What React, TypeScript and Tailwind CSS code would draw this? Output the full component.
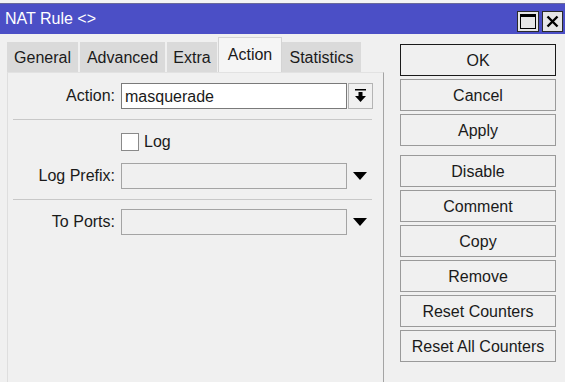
import React from 'react'

const tabs = [
  { name: 'General', w: 'w-[71px]', ml: 'ml-0' },
  { name: 'Advanced', w: 'w-[85px]', ml: 'ml-[2px]' },
  { name: 'Extra', w: 'w-[50px]', ml: 'ml-[2px]' },
  { name: 'Action', w: 'w-[64px]', ml: 'ml-px', active: true },
  { name: 'Statistics', w: 'w-[79px]', ml: 'ml-0' },
]

// right-hand button column
const ActionButton = ({ label, primary }: { label: string; primary?: boolean }) => (
  <button
    className={`h-[32px] w-[156px] pt-[2px] bg-[#f0f0f0] text-[16px] text-[#1a1a1a] border ${
      primary ? 'border-[#1a1a1a]' : 'border-[#9a9a9a]'
    }`}
  >
    {label}
  </button>
)

const DropArrow = () => (
  <svg width="14" height="8" viewBox="0 0 14 8">
    <polygon points="0,0 14,0 7,8" fill="#000" />
  </svg>
)

function App() {
  return (
    <div className="w-[565px] h-[382px] overflow-hidden bg-[#f0f0f0] font-['Liberation_Sans',Arial,sans-serif] text-[16px] text-[#1a1a1a]">
      {/* top strip */}
      <div className="h-[4px] bg-[#f4f4f4] border-b border-[#6a6a9a]" />

      {/* title bar */}
      <div className="h-[30px] bg-[#4b4fc6] flex items-start justify-between pl-[5px] pr-[2px]">
        <span className="text-white leading-[30px]">NAT Rule &lt;&gt;</span>
        <div className="flex gap-[3px] mt-[7px]">
          <div className="w-[22px] h-[21px] bg-[#e6e6e6] border border-[#2a2a2a] flex items-center justify-center">
            <svg width="16" height="15" viewBox="0 0 16 15">
              <rect x="0.5" y="0.5" width="15" height="14" fill="none" stroke="#000" />
              <rect x="0" y="0" width="16" height="3" fill="#000" />
            </svg>
          </div>
          <div className="w-[21px] h-[21px] bg-[#e6e6e6] border border-[#2a2a2a] flex items-center justify-center">
            <svg width="13" height="13" viewBox="0 0 13 13">
              <path d="M1.5 1.5 L11.5 11.5 M11.5 1.5 L1.5 11.5" stroke="#000" strokeWidth="2.4" />
            </svg>
          </div>
        </div>
      </div>

      <div className="flex h-[348px]">
        {/* left: tabs + panel */}
        <div className="w-[384px] pl-[7px] flex flex-col">
          <div className="h-[38px] flex items-end">
            {tabs.map((t) =>
              t.active ? (
                <div
                  key={t.name}
                  className={`${t.w} ${t.ml} h-[35px] bg-[#f5f5f5] border-l border-t border-r border-[#d4d4d4] text-center leading-[34px]`}
                >
                  {t.name}
                </div>
              ) : (
                <div
                  key={t.name}
                  className={`${t.w} ${t.ml} h-[30px] bg-[#dadada] text-center leading-[31px]`}
                >
                  {t.name}
                </div>
              )
            )}
          </div>

          <div className="flex-1 border-l border-t border-r border-l-[#dedede] border-t-[#e2e2e2] border-r-[#a4a4a4] pt-[10px]">
            {/* Action */}
            <div className="flex items-center h-[26px]">
              <span className="w-[107px] text-right leading-[28px]">Action:</span>
              <div className="ml-[6px] w-[226px] h-[26px] bg-white border border-[#7a7a7a] pl-[3px] leading-[26px]">
                masquerade
              </div>
              <div className="ml-px w-[25px] h-[26px] border border-[#b4b4b4] bg-[#f0f0f0] flex items-center justify-center">
                <svg width="11" height="14" viewBox="0 0 11 14">
                  <rect x="0" y="0" width="11" height="1.5" fill="#000" />
                  <rect x="3.5" y="3" width="4" height="5" fill="#000" />
                  <polygon points="0,7 11,7 5.5,13" fill="#000" />
                </svg>
              </div>
            </div>

            <div className="mt-[10px] ml-[5px] w-[359px] h-px bg-[#c8c8c8]" />

            {/* Log */}
            <div className="mt-[13px] ml-[113px] flex items-center h-[18px]">
              <div className="w-[18px] h-[18px] bg-white border border-[#8a8a8a]" />
              <span className="ml-[5px] leading-[20px]">Log</span>
            </div>

            {/* Log Prefix */}
            <div className="mt-[12px] flex items-center h-[26px]">
              <span className="w-[107px] text-right leading-[28px]">Log Prefix:</span>
              <div className="ml-[6px] w-[226px] h-[26px] bg-[#f0f0f0] border border-[#a4a4a4]" />
              <div className="ml-[6px]">
                <DropArrow />
              </div>
            </div>

            <div className="mt-[10px] ml-[5px] w-[359px] h-px bg-[#c8c8c8]" />

            {/* To Ports */}
            <div className="mt-[9px] flex items-center h-[26px]">
              <span className="w-[107px] text-right leading-[28px]">To Ports:</span>
              <div className="ml-[6px] w-[226px] h-[26px] bg-[#f0f0f0] border border-[#a4a4a4]" />
              <div className="ml-[6px]">
                <DropArrow />
              </div>
            </div>
          </div>
        </div>

        {/* right: buttons */}
        <div className="pl-[16px] pt-[10px] flex flex-col">
          <div className="flex flex-col gap-[3px]">
            <ActionButton label="OK" primary />
            <ActionButton label="Cancel" />
            <ActionButton label="Apply" />
          </div>
          <div className="mt-[9px] flex flex-col gap-[3px]">
            <ActionButton label="Disable" />
            <ActionButton label="Comment" />
            <ActionButton label="Copy" />
            <ActionButton label="Remove" />
            <ActionButton label="Reset Counters" />
            <ActionButton label="Reset All Counters" />
          </div>
        </div>
      </div>
    </div>
  )
}

export default App
